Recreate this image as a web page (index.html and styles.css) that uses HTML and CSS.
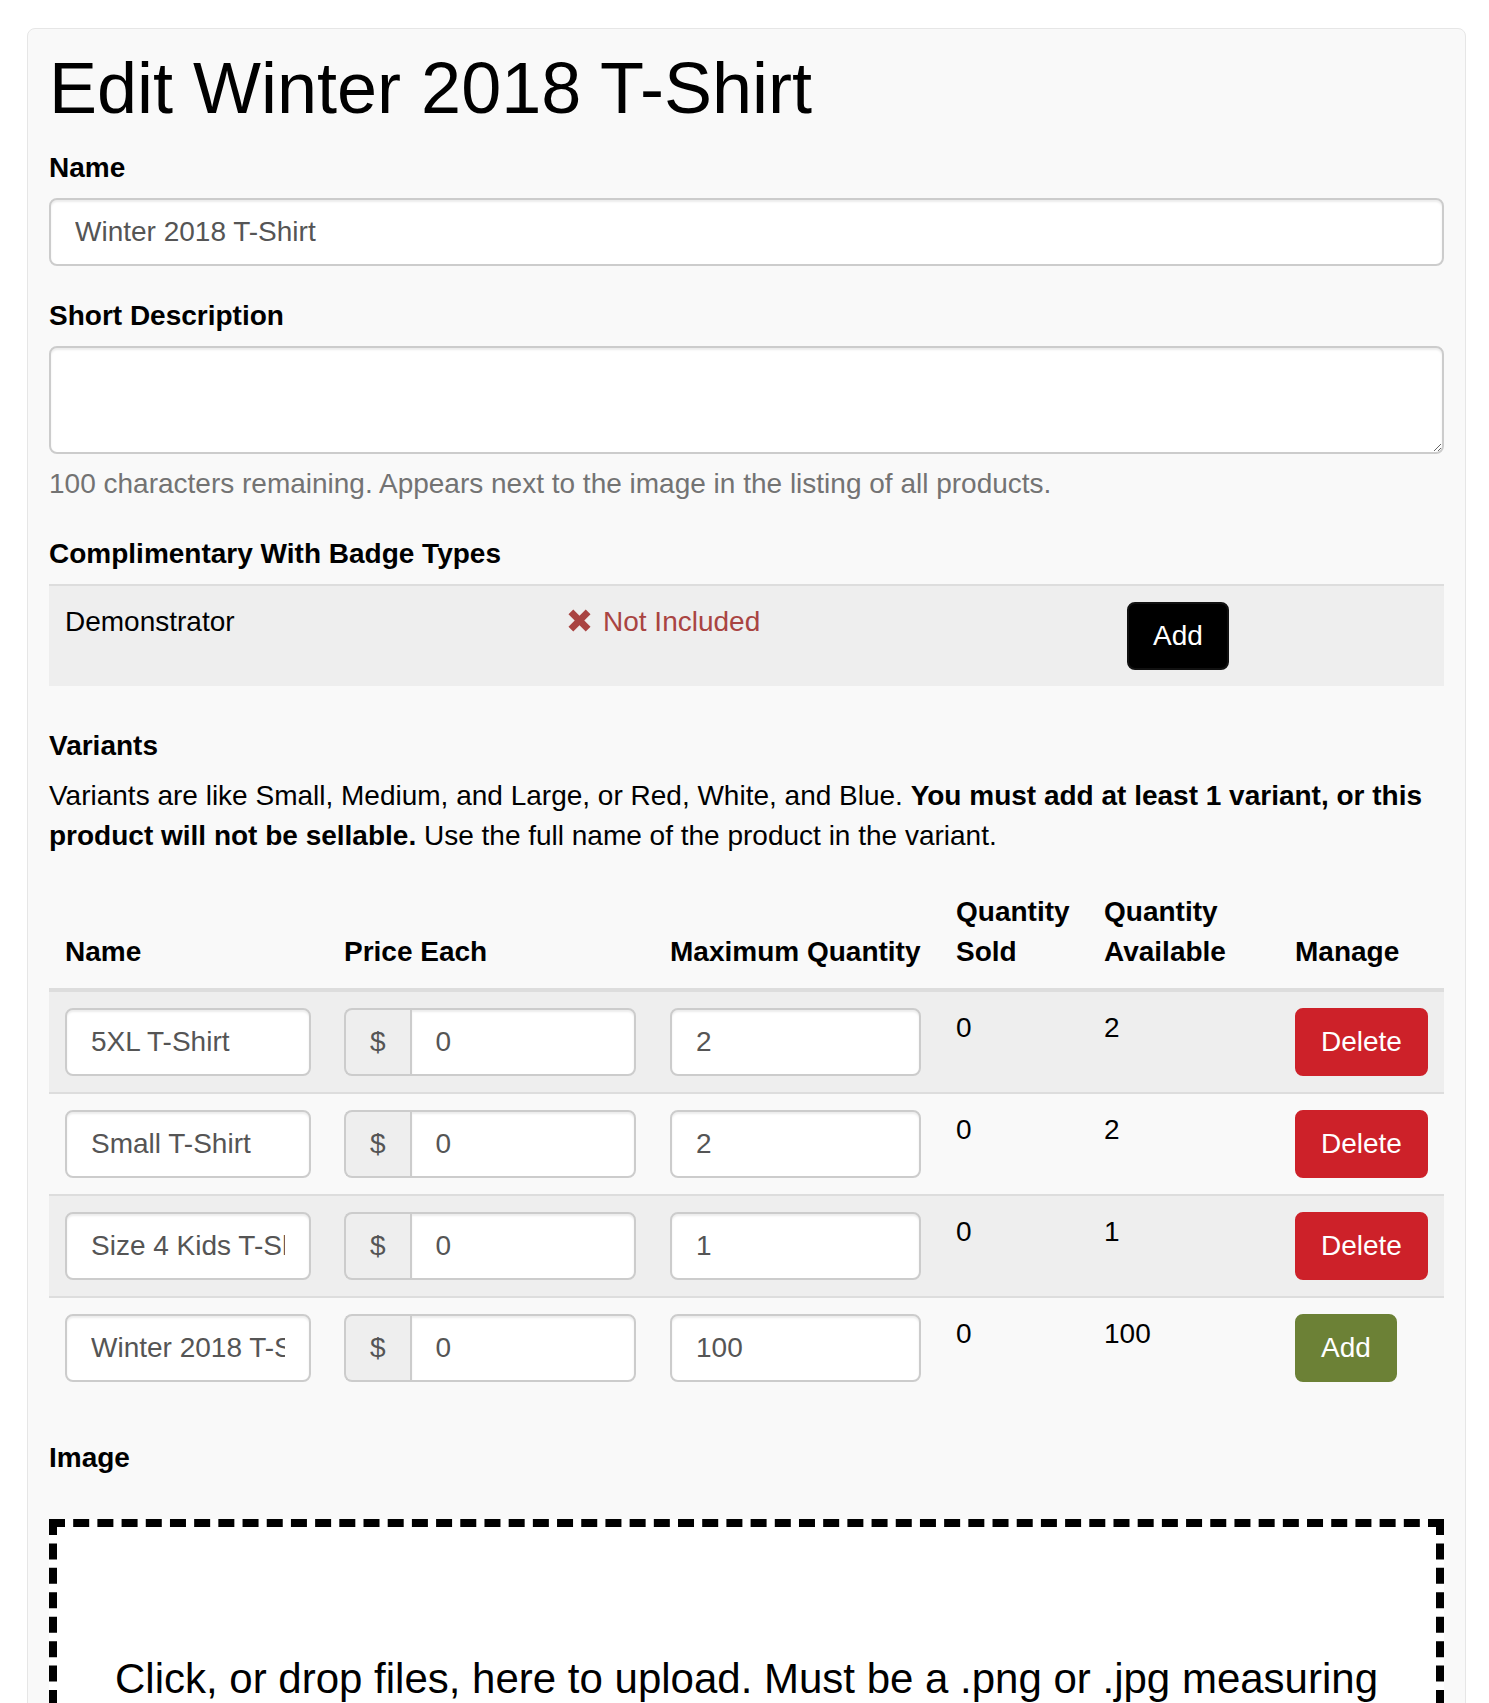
FILE: index.html
```html
<!DOCTYPE html>
<html lang="en">
<head>
<meta charset="utf-8">
<title>Edit Winter 2018 T-Shirt</title>
<link rel="stylesheet" href="styles.css">
</head>
<body>
<div class="well">
  <h1 class="title">Edit Winter 2018 T-Shirt</h1>

  <div class="form-group">
    <label class="label">Name</label>
    <input class="form-control" type="text" value="Winter 2018 T-Shirt">
  </div>

  <div class="form-group">
    <label class="label">Short Description</label>
    <textarea class="form-control textarea"></textarea>
    <p class="help">100 characters remaining. Appears next to the image in the listing of all products.</p>
  </div>

  <div class="label">Complimentary With Badge Types</div>
  <table class="table badges">
    <colgroup>
      <col class="bc1"><col class="bc2"><col class="bc3">
    </colgroup>
    <tbody>
      <tr class="odd">
        <td>Demonstrator</td>
        <td class="danger"><svg class="x-icon" viewBox="0 0 24 24" width="23" height="23"><path d="M5.5 0.5 L12 7 L18.5 0.5 L23.5 5.5 L17 12 L23.5 18.5 L18.5 23.5 L12 17 L5.5 23.5 L0.5 18.5 L7 12 L0.5 5.5 Z" fill="#a94442"/></svg>Not Included</td>
        <td><button class="btn btn-black">Add</button></td>
      </tr>
    </tbody>
  </table>

  <div class="label">Variants</div>
  <p class="para">Variants are like Small, Medium, and Large, or Red, White, and Blue. <strong>You must add at least 1 variant, or this product will not be sellable.</strong> Use the full name of the product in the variant.</p>

  <table class="table variants">
    <colgroup>
      <col class="vc1"><col class="vc2"><col class="vc3"><col class="vc4"><col class="vc5"><col class="vc6">
    </colgroup>
    <thead>
      <tr>
        <th>Name</th>
        <th>Price Each</th>
        <th class="nowrap">Maximum Quantity</th>
        <th>Quantity Sold</th>
        <th>Quantity Available</th>
        <th>Manage</th>
      </tr>
    </thead>
    <tbody>
      <tr class="odd">
        <td><input class="form-control in-name" type="text" value="5XL T-Shirt"></td>
        <td><div class="input-group"><span class="addon">$</span><input class="form-control in-price" type="text" value="0"></div></td>
        <td><input class="form-control in-max" type="text" value="2"></td>
        <td>0</td>
        <td>2</td>
        <td><button class="btn btn-red">Delete</button></td>
      </tr>
      <tr>
        <td><input class="form-control in-name" type="text" value="Small T-Shirt"></td>
        <td><div class="input-group"><span class="addon">$</span><input class="form-control in-price" type="text" value="0"></div></td>
        <td><input class="form-control in-max" type="text" value="2"></td>
        <td>0</td>
        <td>2</td>
        <td><button class="btn btn-red">Delete</button></td>
      </tr>
      <tr class="odd">
        <td><input class="form-control in-name" type="text" value="Size 4 Kids T-Shirt"></td>
        <td><div class="input-group"><span class="addon">$</span><input class="form-control in-price" type="text" value="0"></div></td>
        <td><input class="form-control in-max" type="text" value="1"></td>
        <td>0</td>
        <td>1</td>
        <td><button class="btn btn-red">Delete</button></td>
      </tr>
      <tr>
        <td><input class="form-control in-name" type="text" value="Winter 2018 T-Shirt"></td>
        <td><div class="input-group"><span class="addon">$</span><input class="form-control in-price" type="text" value="0"></div></td>
        <td><input class="form-control in-max" type="text" value="100"></td>
        <td>0</td>
        <td>100</td>
        <td><button class="btn btn-green">Add</button></td>
      </tr>
    </tbody>
  </table>

  <div class="label">Image</div>
  <div class="dropzone">Click, or drop files, here to upload. Must be a .png or .jpg measuring at least 300 by 300 pixels.</div>
</div>
</body>
</html>
```

FILE: styles.css
```css
* {
  box-sizing: border-box;
}

html,
body {
  margin: 0;
  padding: 0;
  background: #fff;
}

body {
  font-family: "Liberation Sans", Arial, sans-serif;
  font-size: 28px;
  line-height: 40px;
  color: #000;
}

.well {
  margin: 28px 0 0 27px;
  width: 1439px;
  background: #f9f9f9;
  border: 1px solid #e6e6e6;
  border-radius: 8px;
  padding: 20px 21px 60px;
}

.title {
  font-size: 72px;
  line-height: 79px;
  font-weight: 400;
  margin: 0 0 20px;
}

.form-group {
  margin-bottom: 30px;
}

.label {
  display: block;
  font-weight: 700;
  margin-bottom: 10px;
}

.form-control {
  display: block;
  width: 100%;
  height: 68px;
  padding: 12px 24px;
  font-family: inherit;
  font-size: 28px;
  line-height: 40px;
  color: #555;
  background: #fff;
  border: 2px solid #ccc;
  border-radius: 8px;
  box-shadow: inset 0 2px 2px rgba(0, 0, 0, 0.075);
  outline: none;
}

.textarea {
  height: 108px;
  resize: vertical;
}

.help {
  color: #737373;
  margin: 10px 0 0;
}

.table {
  width: 100%;
  border-collapse: separate;
  border-spacing: 0;
  table-layout: fixed;
  margin-bottom: 40px;
}

.table td {
  padding: 16px;
  vertical-align: top;
  border-top: 2px solid #ddd;
}

.table tr.odd td {
  background: #eee;
}

.bc1 { width: 503px; }
.bc2 { width: 559px; }
.bc3 { width: 333px; }

.danger {
  color: #a94442;
}

.x-icon {
  vertical-align: -1px;
  margin-right: 12px;
}

.btn {
  display: inline-block;
  height: 68px;
  padding: 12px 24px;
  font-family: inherit;
  font-size: 28px;
  line-height: 40px;
  color: #fff;
  border: 2px solid transparent;
  border-radius: 8px;
  cursor: pointer;
}

.btn-black {
  background: #000;
  border-color: #111;
}

.btn-red {
  background: #cd2129;
  border-color: #cd2129;
}

.btn-green {
  background: #6c8136;
  border-color: #6c8136;
}

.para {
  margin: 0 0 20px;
}

.vc1 { width: 279px; }
.vc2 { width: 326px; }
.vc3 { width: 286px; }
.vc4 { width: 148px; }
.vc5 { width: 191px; }
.vc6 { width: 165px; }

.variants th {
  padding: 16px;
  text-align: left;
  vertical-align: bottom;
  font-weight: 700;
  border-bottom: 4px solid #ddd;
}

.variants th.nowrap {
  white-space: nowrap;
}

.variants tbody tr:first-child td {
  border-top: 0;
}

.in-name {
  width: 246px;
}

.in-max {
  width: 251px;
}

.input-group {
  display: flex;
  width: 292px;
}

.addon {
  display: block;
  height: 68px;
  padding: 12px 24px;
  font-size: 28px;
  line-height: 40px;
  color: #555;
  background: #eee;
  border: 2px solid #ccc;
  border-right: 0;
  border-radius: 8px 0 0 8px;
}

.in-price {
  flex: 1;
  min-width: 0;
  border-radius: 0 8px 8px 0;
}

.dropzone {
  margin-top: 41px;
  background: #fff;
  border: 8px dashed #000;
  padding: 122px 40px 100px;
  font-size: 42px;
  line-height: 60px;
  text-align: center;
}
```
